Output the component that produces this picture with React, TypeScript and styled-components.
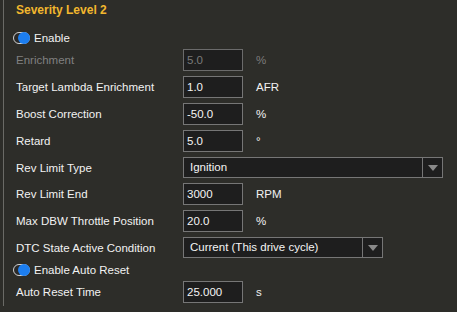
import React from 'react';
import styled, { createGlobalStyle } from 'styled-components';

const GlobalStyle = createGlobalStyle`
  html, body {
    margin: 0;
    padding: 0;
    background: #2d2d29;
  }
  body {
    font-family: "Liberation Sans", Arial, sans-serif;
    font-size: 11.5px;
    color: #f2f2f2;
  }
`;

const Panel = styled.div`
  margin-left: 3px;
  width: 454px;
  height: 306px;
  border-left: 1px solid #6a6a66;
  box-sizing: border-box;
  padding-left: 12px;
`;

const Title = styled.div`
  height: 21px;
  line-height: 21px;
  font-weight: bold;
  font-size: 12px;
  color: #f2b72e;
`;

const Form = styled.div`
  margin-top: 10px;
  display: grid;
  grid-template-columns: 167px 60px 1fr;
  row-gap: 5px;
  align-items: center;
`;

const ToggleRow = styled.div`
  grid-column: 1 / -1;
  height: 13px;
  display: flex;
  align-items: center;
  gap: 4px;
  margin-left: -3px;
`;

const Toggle = styled.span`
  position: relative;
  width: 15px;
  height: 10px;
  border: 1px solid #d0d0d0;
  border-radius: 7px;
  background: #2a2a2a;
  &::after {
    content: '';
    position: absolute;
    right: -1px;
    top: -1px;
    width: 12px;
    height: 12px;
    border-radius: 50%;
    background: #1c7ef0;
  }
`;

const Label = styled.span<{ $disabled?: boolean }>`
  color: ${(p) => (p.$disabled ? '#808080' : '#f2f2f2')};
  white-space: nowrap;
`;

const Input = styled.div<{ $disabled?: boolean }>`
  height: 22px;
  box-sizing: border-box;
  border: 1px solid ${(p) => (p.$disabled ? '#6b6b6b' : '#767676')};
  background: #1e1e1e;
  padding-left: 3px;
  line-height: 20px;
  color: ${(p) => (p.$disabled ? '#7a7a7a' : '#f4f4f4')};
`;

const Unit = styled.span<{ $disabled?: boolean }>`
  padding-left: 13px;
  color: ${(p) => (p.$disabled ? '#7c7c7c' : '#f2f2f2')};
`;

const Select = styled.div<{ $width: number }>`
  grid-column: 2 / -1;
  width: ${(p) => p.$width}px;
  height: 21px;
  box-sizing: border-box;
  border: 1px solid #767676;
  background: #1e1e1e;
  display: flex;
`;

const SelectText = styled.span`
  flex: 1;
  padding-left: 6px;
  line-height: 19px;
  color: #f4f4f4;
`;

const Arrow = styled.span`
  width: 19px;
  border-left: 1px solid #767676;
  display: flex;
  align-items: center;
  justify-content: center;
  &::after {
    content: '';
    border-left: 5px solid transparent;
    border-right: 5px solid transparent;
    border-top: 6px solid #8a8a8a;
  }
`;

type Field = { label: string; value: string; unit: string; disabled?: boolean };

const Row: React.FC<Field> = ({ label, value, unit, disabled }) => (
  <>
    <Label $disabled={disabled}>{label}</Label>
    <Input $disabled={disabled}>{value}</Input>
    <Unit $disabled={disabled}>{unit}</Unit>
  </>
);

const App: React.FC = () => (
  <>
    <GlobalStyle />
    <Panel>
      <Title>Severity Level 2</Title>
      <Form>
        <ToggleRow>
          <Toggle />
          <Label>Enable</Label>
        </ToggleRow>
        <Row label="Enrichment" value="5.0" unit="%" disabled />
        <Row label="Target Lambda Enrichment" value="1.0" unit="AFR" />
        <Row label="Boost Correction" value="-50.0" unit="%" />
        <Row label="Retard" value="5.0" unit="°" />
        <Label>Rev Limit Type</Label>
        <Select $width={260}>
          <SelectText>Ignition</SelectText>
          <Arrow />
        </Select>
        <Row label="Rev Limit End" value="3000" unit="RPM" />
        <Row label="Max DBW Throttle Position" value="20.0" unit="%" />
        <Label>DTC State Active Condition</Label>
        <Select $width={200}>
          <SelectText>Current (This drive cycle)</SelectText>
          <Arrow />
        </Select>
        <ToggleRow>
          <Toggle />
          <Label>Enable Auto Reset</Label>
        </ToggleRow>
        <Row label="Auto Reset Time" value="25.000" unit="s" />
      </Form>
    </Panel>
  </>
);

export default App;
